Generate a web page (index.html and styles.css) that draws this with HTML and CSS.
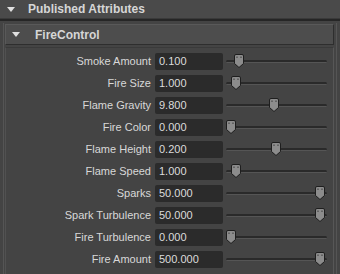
FILE: index.html
```html
<!DOCTYPE html>
<html lang="en">
<head>
    <meta charset="UTF-8">
    <title>Attribute Editor</title>
    <link rel="stylesheet" href="styles.css">
</head>
<body>
    <div class="pub-header">
        <span class="arrow"></span>
        <span class="title">Published Attributes</span>
    </div>
    <div class="pub-sep"></div>

    <div class="outer">
        <div class="frame">
            <div class="frame-header">
                <span class="arrow"></span>
                <span class="title">FireControl</span>
            </div>
            <div class="frame-body">
                <div class="row">
                    <label>Smoke Amount</label>
                    <div class="field">0.100</div>
                    <div class="slider"><svg class="thumb" style="left: 8px" viewBox="0 0 10 14"><path d="M2 0.5H8Q9.5 0.5 9.5 2V9.5L5 13.5L0.5 9.5V2Q0.5 0.5 2 0.5Z"/><rect x="2.5" y="2.5" width="1" height="1.5"/><rect x="6.5" y="2.5" width="1" height="1.5"/></svg></div>
                </div>
                <div class="row">
                    <label>Fire Size</label>
                    <div class="field">1.000</div>
                    <div class="slider"><svg class="thumb" style="left: 5px" viewBox="0 0 10 14"><path d="M2 0.5H8Q9.5 0.5 9.5 2V9.5L5 13.5L0.5 9.5V2Q0.5 0.5 2 0.5Z"/><rect x="2.5" y="2.5" width="1" height="1.5"/><rect x="6.5" y="2.5" width="1" height="1.5"/></svg></div>
                </div>
                <div class="row">
                    <label>Flame Gravity</label>
                    <div class="field">9.800</div>
                    <div class="slider"><svg class="thumb" style="left: 43px" viewBox="0 0 10 14"><path d="M2 0.5H8Q9.5 0.5 9.5 2V9.5L5 13.5L0.5 9.5V2Q0.5 0.5 2 0.5Z"/><rect x="2.5" y="2.5" width="1" height="1.5"/><rect x="6.5" y="2.5" width="1" height="1.5"/></svg></div>
                </div>
                <div class="row">
                    <label>Fire Color</label>
                    <div class="field">0.000</div>
                    <div class="slider"><svg class="thumb" style="left: 0px" viewBox="0 0 10 14"><path d="M2 0.5H8Q9.5 0.5 9.5 2V9.5L5 13.5L0.5 9.5V2Q0.5 0.5 2 0.5Z"/><rect x="2.5" y="2.5" width="1" height="1.5"/><rect x="6.5" y="2.5" width="1" height="1.5"/></svg></div>
                </div>
                <div class="row">
                    <label>Flame Height</label>
                    <div class="field">0.200</div>
                    <div class="slider"><svg class="thumb" style="left: 45px" viewBox="0 0 10 14"><path d="M2 0.5H8Q9.5 0.5 9.5 2V9.5L5 13.5L0.5 9.5V2Q0.5 0.5 2 0.5Z"/><rect x="2.5" y="2.5" width="1" height="1.5"/><rect x="6.5" y="2.5" width="1" height="1.5"/></svg></div>
                </div>
                <div class="row">
                    <label>Flame Speed</label>
                    <div class="field">1.000</div>
                    <div class="slider"><svg class="thumb" style="left: 5px" viewBox="0 0 10 14"><path d="M2 0.5H8Q9.5 0.5 9.5 2V9.5L5 13.5L0.5 9.5V2Q0.5 0.5 2 0.5Z"/><rect x="2.5" y="2.5" width="1" height="1.5"/><rect x="6.5" y="2.5" width="1" height="1.5"/></svg></div>
                </div>
                <div class="row">
                    <label>Sparks</label>
                    <div class="field">50.000</div>
                    <div class="slider"><svg class="thumb" style="left: 89px" viewBox="0 0 10 14"><path d="M2 0.5H8Q9.5 0.5 9.5 2V9.5L5 13.5L0.5 9.5V2Q0.5 0.5 2 0.5Z"/><rect x="2.5" y="2.5" width="1" height="1.5"/><rect x="6.5" y="2.5" width="1" height="1.5"/></svg></div>
                </div>
                <div class="row">
                    <label>Spark Turbulence</label>
                    <div class="field">50.000</div>
                    <div class="slider"><svg class="thumb" style="left: 89px" viewBox="0 0 10 14"><path d="M2 0.5H8Q9.5 0.5 9.5 2V9.5L5 13.5L0.5 9.5V2Q0.5 0.5 2 0.5Z"/><rect x="2.5" y="2.5" width="1" height="1.5"/><rect x="6.5" y="2.5" width="1" height="1.5"/></svg></div>
                </div>
                <div class="row">
                    <label>Fire Turbulence</label>
                    <div class="field">0.000</div>
                    <div class="slider"><svg class="thumb" style="left: 0px" viewBox="0 0 10 14"><path d="M2 0.5H8Q9.5 0.5 9.5 2V9.5L5 13.5L0.5 9.5V2Q0.5 0.5 2 0.5Z"/><rect x="2.5" y="2.5" width="1" height="1.5"/><rect x="6.5" y="2.5" width="1" height="1.5"/></svg></div>
                </div>
                <div class="row">
                    <label>Fire Amount</label>
                    <div class="field">500.000</div>
                    <div class="slider"><svg class="thumb" style="left: 89px" viewBox="0 0 10 14"><path d="M2 0.5H8Q9.5 0.5 9.5 2V9.5L5 13.5L0.5 9.5V2Q0.5 0.5 2 0.5Z"/><rect x="2.5" y="2.5" width="1" height="1.5"/><rect x="6.5" y="2.5" width="1" height="1.5"/></svg></div>
                </div>
            </div>
        </div>
    </div>
</body>
</html>
```

FILE: styles.css
```css
body {
    margin: 0;
    width: 340px;
    height: 274px;
    overflow: hidden;
    background-color: #444444;
    font-family: "Liberation Sans", Arial, sans-serif;
    color: #d6d6d6;
}

.arrow {
    width: 0;
    height: 0;
    border-left: 4px solid transparent;
    border-right: 4px solid transparent;
    border-top: 5px solid #e0e0e0;
}

.title {
    font-weight: bold;
    font-size: 12px;
}

.pub-header {
    height: 18px;
    background-color: #4a4a4a;
    display: flex;
    align-items: center;
    padding-left: 7px;
    gap: 13px;
}

.pub-sep {
    height: 1px;
    background-color: #3a3a3a;
    border-bottom: 2px solid #262626;
}

.outer {
    margin: 2px 3px 0 3px;
    border-left: 1px solid #555;
    border-right: 1px solid #555;
    border-bottom: 1px solid #555;
    padding: 1px 2px 2px 1px;
    height: 249px;
}

.frame-header {
    height: 19px;
    background-color: #4d4d4d;
    border: 1px solid #595959;
    border-bottom-color: #2e2e2e;
    border-right-color: #2e2e2e;
    display: flex;
    align-items: center;
    padding-left: 6px;
    gap: 15px;
}

.frame-body {
    margin-top: 2px;
    border: 1px solid #3a3a3a;
    border-left-color: #515151;
    border-right-color: #575757;
    border-bottom-color: #575757;
    padding: 2px 0 5px 0;
}

.row {
    display: grid;
    grid-template-columns: 145px 68px 100px;
    column-gap: 4px;
    align-items: center;
    height: 22px;
}

.row label {
    text-align: right;
    font-size: 11px;
    color: #d8d8d8;
}

.field {
    height: 17px;
    line-height: 17px;
    background-color: #2b2b2b;
    border-radius: 2px;
    padding-left: 4px;
    font-size: 11px;
    color: #dcdcdc;
}

.slider {
    position: relative;
    height: 17px;
    margin-left: -1px;
}

.slider::before {
    content: "";
    position: absolute;
    left: 0;
    right: 0;
    top: 7px;
    height: 2px;
    border-radius: 2px;
    background-color: #2a2a2a;
    border-bottom: 1px solid #555;
}

.thumb {
    position: absolute;
    top: 1px;
    width: 10px;
    height: 14px;
}

.thumb path {
    fill: #8c8c8c;
    stroke: #1e1e1e;
    stroke-width: 1;
}

.thumb rect {
    fill: #3a3a3a;
}
```
